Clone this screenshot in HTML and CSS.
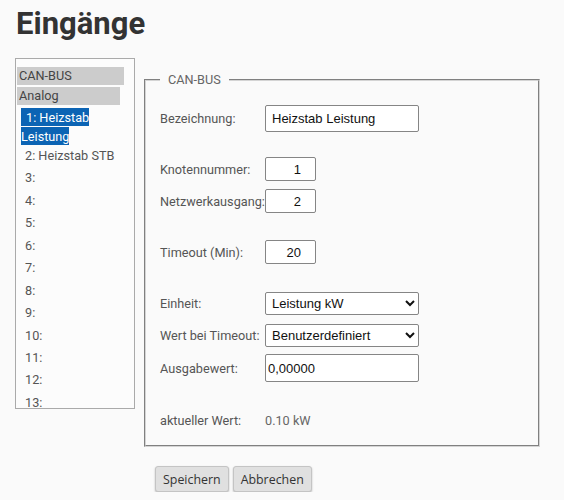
FILE: index.html
```html
<!DOCTYPE html>
<html lang="de">
<head>
<meta charset="utf-8">
<title>Eingänge</title>
<link rel="stylesheet" href="styles.css">
</head>
<body>
<div class="page">
  <h1 class="title">Eingänge</h1>
  <div class="main">
    <div class="list">
      <div class="grp grp-can">CAN-BUS</div>
      <div class="grp grp-analog">Analog</div>
      <div class="item-sel"><span class="sel">1: Heizstab Leistung</span></div>
      <div class="item">2: Heizstab STB</div>
      <div class="item">3:</div>
      <div class="item">4:</div>
      <div class="item">5:</div>
      <div class="item">6:</div>
      <div class="item">7:</div>
      <div class="item">8:</div>
      <div class="item">9:</div>
      <div class="item">10:</div>
      <div class="item">11:</div>
      <div class="item">12:</div>
      <div class="item">13:</div>
    </div>
    <div class="right">
      <fieldset class="box">
        <legend class="legend">CAN-BUS</legend>
        <div class="row">
          <span class="label">Bezeichnung:</span>
          <input class="in in-wide" type="text" value="Heizstab Leistung">
        </div>
        <div class="row gap">
          <span class="label">Knotennummer:</span>
          <input class="in in-num" type="text" value="1">
        </div>
        <div class="row">
          <span class="label">Netzwerkausgang:</span>
          <input class="in in-num" type="text" value="2">
        </div>
        <div class="row gap">
          <span class="label">Timeout (Min):</span>
          <input class="in in-num" type="text" value="20">
        </div>
        <div class="row gap">
          <span class="label">Einheit:</span>
          <select class="sel-box">
            <option>Leistung kW</option>
          </select>
        </div>
        <div class="row">
          <span class="label">Wert bei Timeout:</span>
          <select class="sel-box">
            <option>Benutzerdefiniert</option>
          </select>
        </div>
        <div class="row tall">
          <span class="label">Ausgabewert:</span>
          <input class="in in-out" type="text" value="0,00000">
        </div>
        <div class="row gap">
          <span class="label">aktueller Wert:</span>
          <span class="value">0.10 kW</span>
        </div>
      </fieldset>
      <div class="buttons">
        <button class="btn" type="button">Speichern</button>
        <button class="btn" type="button">Abbrechen</button>
      </div>
    </div>
  </div>
</div>
</body>
</html>
```
FILE: styles.css
```css
html, body {
  margin: 0;
  padding: 0;
  background: #fafafa;
}

body {
  font-family: Roboto, "Liberation Sans", sans-serif;
  font-size: 12.7px;
  color: #555;
}

.page {
  padding: 5px 0 0 15px;
}

.title {
  margin: 0 0 15px 1px;
  font-family: Roboto, sans-serif;
  font-weight: 700;
  font-size: 31px;
  line-height: 38px;
  color: #333;
}

.main {
  display: flex;
  align-items: flex-start;
}

.list {
  box-sizing: border-box;
  width: 120px;
  height: 351px;
  border: 1px solid #aaa;
  padding: 8px 0 0 1px;
  overflow: hidden;
  background: #fcfcfc;
  flex: none;
}

.grp {
  background: #cccccc;
  color: #444;
  height: 18px;
  line-height: 18px;
  padding-left: 2px;
  margin-bottom: 2px;
}

.grp-can {
  width: 105px;
}

.grp-analog {
  width: 101px;
}

.item-sel {
  width: 90px;
  padding-left: 4px;
  line-height: 19px;
}

.sel {
  background: #0c64b4;
  color: #fff;
  padding: 1.5px 0 1.5px 5px;
}

.item {
  padding-left: 8px;
  line-height: 22.45px;
  height: 22.45px;
  white-space: nowrap;
  color: #555;
}

.right {
  margin-left: 9px;
  margin-top: 14px;
}

.box {
  box-sizing: border-box;
  width: 396px;
  margin: 0;
  padding: 15px 14px 9px 14px;
  border: 2px groove #d4d4d4;
}

.legend {
  padding: 0 8px;
  color: #666;
}

.row {
  display: flex;
  align-items: center;
  min-height: 32px;
}

.row.gap {
  margin-top: 19px;
}

.row.tall {
  min-height: 34px;
}

.label {
  width: 105px;
  flex: none;
  color: #555;
  white-space: nowrap;
}

.in {
  box-sizing: border-box;
  margin: 0;
  border: 1px solid #858585;
  border-radius: 2px;
  background: #fff;
  font-family: "Liberation Sans", Arial, sans-serif;
  font-size: 13px;
  color: #111;
}

.in-wide {
  width: 154px;
  height: 27px;
  padding: 0 6px;
}

.in-num {
  width: 51px;
  height: 24px;
  padding: 0 14px 0 2px;
  text-align: right;
}

.in-out {
  width: 154px;
  height: 28px;
  padding: 0 2px;
}

.sel-box {
  box-sizing: border-box;
  width: 154px;
  height: 23px;
  margin: 0;
  border: 1px solid #858585;
  border-radius: 2px;
  background: #fff;
  font-family: "Liberation Sans", Arial, sans-serif;
  font-size: 13px;
  color: #111;
  padding-left: 2px;
}

.value {
  color: #666;
}

.buttons {
  margin: 19px 0 0 11px;
  display: flex;
  gap: 4px;
}

.btn {
  box-sizing: border-box;
  height: 26px;
  padding: 0 7px;
  margin: 0;
  font-family: "Open Sans", sans-serif;
  font-size: 12.4px;
  color: #333;
  background: #e0e0e0;
  border: 1px solid #c4c4c4;
  border-radius: 3px;
  box-shadow: 0 1px 2px rgba(0, 0, 0, 0.25);
}
```
